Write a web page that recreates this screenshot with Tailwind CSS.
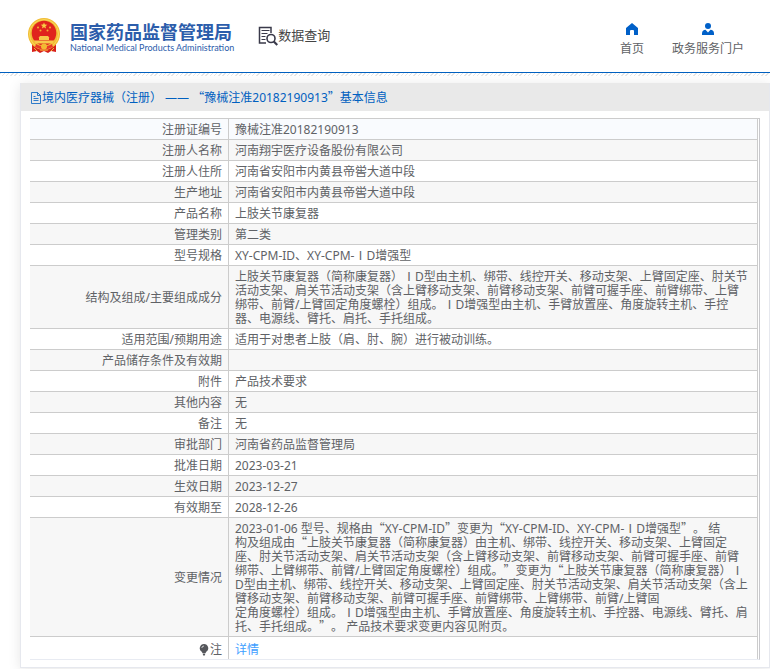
<!DOCTYPE html>
<html lang="zh-CN">
  <head>
    <meta charset="UTF-8" />
    <meta name="viewport" content="width=device-width, initial-scale=1.0" />
    <title>数据查询</title>
    <script src="https://cdn.jsdelivr.net/npm/@tailwindcss/browser@4"></script>
  </head>

  <body class="bg-white font-['Noto_Sans','Noto_Sans_CJK_SC',sans-serif] text-xs text-[#606266] [text-spacing-trim:space-all]">
    <!-- header -->
    <header class="flex h-[73px] items-center border-b border-[#0060c0] pl-7 pr-[26px]">
      <a href="#" class="flex items-center gap-2.5">
        <svg class="h-9 w-8" viewBox="0 0 32 36">
          <path d="M4 24 L4 34 L9 33 L12 35 L16 33 L20 35 L23 33 L28 34 L28 24 Z" fill="#d7201b" />
          <circle cx="16" cy="16" r="16" fill="#f2bd35" />
          <circle cx="16" cy="16" r="14.5" fill="none" stroke="#f9d85c" stroke-width="1" />
          <circle cx="16" cy="15" r="12.3" fill="#e0241d" />
          <path d="M16 4.4l.9 2.2 2.4.1-1.9 1.5.7 2.3-2.1-1.3-2.1 1.3.7-2.3-1.9-1.5 2.4-.1z" fill="#f9cf45" />
          <g fill="#f0b034">
            <circle cx="10" cy="9.500" r="1" />
            <circle cx="22" cy="9.500" r="1" />
            <circle cx="12.500" cy="12.500" r="1" />
            <circle cx="19.500" cy="12.500" r="1" />
          </g>
          <path d="M12 18h8l1.500 2h-11zM11 20h10v2h-10zM6 22.500h20l-1.500 3h-17z" fill="#f7c94a" />
          <path d="M8 26c5 3 11 3 16 0l1 3-5 2-1 2h-6l-1-2-5-2z" fill="#e8392a" />
          <circle cx="16" cy="28.500" r="3" fill="#f3b933" />
          <path d="M6 30l3 3M26 30l-3 3M12 32h8" stroke="#f3b933" fill="none" />
        </svg>
        <span class="flex flex-col pt-1 text-[#2c5dab]">
          <span class="text-lg font-bold leading-5">国家药品监督管理局</span>
          <span class="font-[Lato,sans-serif] text-[9px] leading-3">National Medical Products Administration</span>
        </span>
      </a>

      <a href="#" class="ml-6 flex items-center text-[13px] text-[#444]">
        <svg class="h-5 w-5" viewBox="0 0 20 20" fill="none" stroke="#3a3a4a">
          <path d="M13 7V1.500H1.500v15.500H8" stroke-width="1.500" />
          <path d="M3.500 4.500h8M3.500 7.500h6M3.500 10.500h4M3.500 13.500h4" />
          <circle cx="13" cy="12.500" r="4" stroke-width="1.600" />
          <path d="M15.800 15.500l3.500 3.500" stroke-width="2.200" />
        </svg>
        数据查询
      </a>

      <nav class="ml-auto flex gap-7 pt-2 leading-4">
        <a href="#" class="flex flex-col items-center gap-1.5">
          <svg class="h-3 w-3" viewBox="0 0 12 12" fill="#0060c8">
            <path d="M6 0L0 5v7h4V8a1 1 0 0 1 1-1h2a1 1 0 0 1 1 1v4h4V5z" />
          </svg>
          首页
        </a>
        <a href="#" class="flex flex-col items-center gap-1.5">
          <svg class="h-3 w-3" viewBox="0 0 12 12" fill="#0060c8">
            <circle cx="6" cy="3" r="3" />
            <path d="M0 12V10.500C0 8 1.500 7 3.500 6.800L6 9.500l2.500-2.700C10.500 7 12 8 12 10.500V12z" />
          </svg>
          政务服务门户
        </a>
      </nav>
    </header>
    <div class="h-[3px] bg-[repeating-linear-gradient(135deg,#e6e6e6_0_1px,#fff_1px_3px)]"></div>

    <!-- record card -->
    <main class="mb-px ml-5 mt-[7px] border border-t-0 border-[#e6e8ee] pb-[7px] shadow-[0_2px_12px_0] shadow-black/10">
      <h1 class="flex h-7 items-center bg-[#e9e9e9] pl-[9px] pt-0.5 text-[#0060c0]">
        <svg class="h-3 w-3" viewBox="0 0 12 12" fill="none" stroke="#0060c0">
          <path d="M1.500 .5h6l3 3v8h-9zM7.500 .5v3h3M3.500 4.500h2M3.500 6.500h5M3.500 8.500h5" stroke-width=".8" />
        </svg>
        <span>境内医疗器械（注册） —— <span class="font-['Noto_Sans_CJK_SC'] leading-none">“</span>豫械注准20182190913<span class="font-['Noto_Sans_CJK_SC'] leading-none">”</span>基本信息</span>
      </h1>

      <div class="ml-[9px] mr-[9px] mt-[7px] border-b border-r border-t border-b-[#e8ebf2] border-r-[#c8c8cc] border-t-[#ccc] pr-px">
        <table class="w-full border-separate border-spacing-0 border-r border-[#ccc] leading-[14px] [&_td]:border-b [&_td]:border-[#ccc] [&_td]:px-1.5 [&_td]:pb-0.5 [&_td]:pt-1 [&_th]:w-[199px] [&_th]:border-b [&_th]:border-r [&_th]:border-[#ccc] [&_th]:px-1.5 [&_th]:pb-0.5 [&_th]:pt-1 [&_th]:text-right [&_th]:font-normal [&_tr:nth-child(even)]:bg-[#f7f7f7] [&_tr:last-child>*]:border-b-0 [&_tr:last-child>*]:pb-0.5 [&_tr:last-child>*]:pt-1.5">
          <tbody>
            <tr class="bg-[#f9fbfe]"><th scope="row">注册证编号</th><td>豫械注准20182190913</td></tr>
            <tr><th scope="row">注册人名称</th><td>河南翔宇医疗设备股份有限公司</td></tr>
            <tr><th scope="row">注册人住所</th><td>河南省安阳市内黄县帝喾大道中段</td></tr>
            <tr><th scope="row">生产地址</th><td>河南省安阳市内黄县帝喾大道中段</td></tr>
            <tr><th scope="row">产品名称</th><td>上肢关节康复器</td></tr>
            <tr><th scope="row">管理类别</th><td>第二类</td></tr>
            <tr><th scope="row">型号规格</th><td>XY-CPM-ID、XY-CPM-ⅠD增强型</td></tr>
            <tr>
              <th scope="row">结构及组成/主要组成成分</th>
              <td class="whitespace-nowrap">
                上肢关节康复器（简称康复器）ⅠD型由主机、绑带、线控开关、移动支架、上臂固定座、肘关节<br />
                活动支架、肩关节活动支架（含上臂移动支架、前臂移动支架、前臂可握手座、前臂绑带、上臂<br />
                绑带、前臂/上臂固定角度螺栓）组成。ⅠD增强型由主机、手臂放置座、角度旋转主机、手控<br />
                器、电源线、臂托、肩托、手托组成。
              </td>
            </tr>
            <tr><th scope="row">适用范围/预期用途</th><td>适用于对患者上肢（肩、肘、腕）进行被动训练。</td></tr>
            <tr><th scope="row">产品储存条件及有效期</th><td></td></tr>
            <tr><th scope="row">附件</th><td>产品技术要求</td></tr>
            <tr><th scope="row">其他内容</th><td>无</td></tr>
            <tr><th scope="row">备注</th><td>无</td></tr>
            <tr><th scope="row">审批部门</th><td>河南省药品监督管理局</td></tr>
            <tr><th scope="row">批准日期</th><td>2023-03-21</td></tr>
            <tr><th scope="row">生效日期</th><td>2023-12-27</td></tr>
            <tr><th scope="row">有效期至</th><td>2028-12-26</td></tr>
            <tr>
              <th scope="row">变更情况</th>
              <td class="whitespace-nowrap [&_span]:font-['Noto_Sans_CJK_SC'] [&_span]:leading-none">
                2023-01-06 型号、规格由<span>“</span>XY-CPM-ID<span>”</span>变更为<span>“</span>XY-CPM-ID、XY-CPM-ⅠD增强型<span>”</span>。 结<br />
                构及组成由<span>“</span>上肢关节康复器（简称康复器）由主机、绑带、线控开关、移动支架、上臂固定<br />
                座、肘关节活动支架、肩关节活动支架（含上臂移动支架、前臂移动支架、前臂可握手座、前臂<br />
                绑带、上臂绑带、前臂/上臂固定角度螺栓）组成。<span>”</span>变更为<span>“</span>上肢关节康复器（简称康复器）Ⅰ<br />
                D型由主机、绑带、线控开关、移动支架、上臂固定座、肘关节活动支架、肩关节活动支架（含上<br />
                臂移动支架、前臂移动支架、前臂可握手座、前臂绑带、上臂绑带、前臂/上臂固<br />
                定角度螺栓）组成。ⅠD增强型由主机、手臂放置座、角度旋转主机、手控器、电源线、臂托、肩<br />
                托、手托组成。<span>”</span>。 产品技术要求变更内容见附页。
              </td>
            </tr>
            <tr>
              <th scope="row">
                <span class="flex items-center justify-end">
                  <svg class="h-3 w-3" viewBox="0 0 12 12" fill="#55575c">
                    <path d="M6 0a4.200 4.200 0 0 1 2.500 7.600L7.500 9h-3l-1-1.400A4.200 4.200 0 0 1 6 0zM4.600 9.500h2.800L6.800 11.500H5.200z" />
                    <path d="M6 2a2.300 2.300 0 0 0-2.200 2" fill="none" stroke="#fff" stroke-width=".7" />
                  </svg>
                  注
                </span>
              </th>
              <td><a href="#" class="text-[#409eff]">详情</a></td>
            </tr>
          </tbody>
        </table>
      </div>
    </main>
  </body>
</html>
